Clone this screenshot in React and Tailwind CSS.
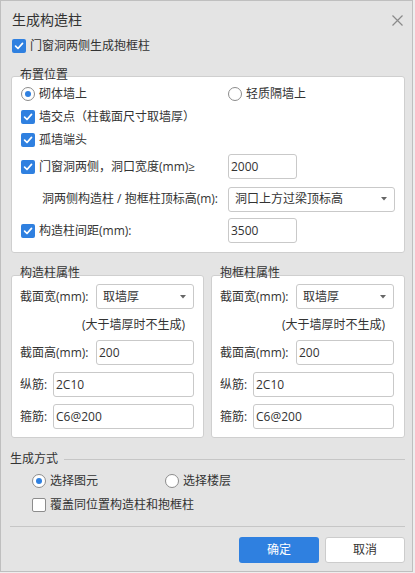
import React from "react";

const font = { fontFamily: '"Open Sans", "Noto Sans CJK SC", sans-serif' };

function Check({ checked = true }) {
  if (!checked) {
    return (
      <span className="block w-[14px] h-[14px] shrink-0 rounded-[2px] border border-[#8c8c8c] bg-white" />
    );
  }
  return (
    <span className="flex w-[14px] h-[14px] shrink-0 items-center justify-center rounded-[2px] bg-[#2f80e0]">
      <svg width="10" height="10" viewBox="0 0 10 10">
        <path d="M1.6 5.2 L4 7.5 L8.5 2.4" fill="none" stroke="white" strokeWidth="1.7" strokeLinecap="round" strokeLinejoin="round" />
      </svg>
    </span>
  );
}

function Radio({ checked }) {
  return (
    <span className="flex w-[14px] h-[14px] shrink-0 items-center justify-center rounded-full border border-[#8c8c8c] bg-white">
      {checked && <span className="block w-[6px] h-[6px] rounded-full bg-[#2f80e0]" />}
    </span>
  );
}

function Input({ value, className = "" }) {
  return (
    <div className={`flex h-[25px] items-center rounded-[3px] border border-[#c9c9c9] bg-white pl-[2px] text-[12px] text-[#333] ${className}`}>
      {value}
    </div>
  );
}

function Select({ value, className = "" }) {
  return (
    <div className={`flex h-[25px] items-center justify-between rounded-[3px] border border-[#c9c9c9] bg-white pl-[6px] pr-[7px] text-[12px] text-[#333] ${className}`}>
      <span>{value}</span>
      <svg width="6" height="4" viewBox="0 0 6 4">
        <path d="M0 0 L6 0 L3 3.5 Z" fill="#666" />
      </svg>
    </div>
  );
}

function PropBox({ title, className = "" }) {
  return (
    <div className={`relative rounded-[3px] border border-[#cfcfcf] bg-white pl-[8px] pt-[8px] pb-[8px] ${className}`}>
      <span className="absolute left-[8px] top-[-10px] h-[14px] leading-[14px] text-[12px] text-[#333]">
        {title}
      </span>
      <div className="flex h-[25px] items-center">
        <span className="w-[76px] text-[12px] text-[#333]">截面宽(mm):</span>
        <Select value="取墙厚" className="w-[98px]" />
      </div>
      <div className="flex h-[31px] items-center pl-[62px] text-[12px] text-[#333]">
        (大于墙厚时不生成)
      </div>
      <div className="flex h-[25px] items-center">
        <span className="w-[76px] text-[12px] text-[#333]">截面高(mm):</span>
        <Input value="200" className="w-[98px]" />
      </div>
      <div className="mt-[7px] flex h-[25px] items-center">
        <span className="w-[33px] text-[12px] text-[#333]">纵筋:</span>
        <Input value="2C10" className="w-[141px]" />
      </div>
      <div className="mt-[7px] flex h-[25px] items-center">
        <span className="w-[33px] text-[12px] text-[#333]">箍筋:</span>
        <Input value="C6@200" className="w-[141px]" />
      </div>
    </div>
  );
}

export default function App() {
  return (
    <div className="w-[415px] h-[573px] bg-[#eeeeee]" style={font}>
      <div className="w-[413px] h-[572px] border border-[#bfbfbf] bg-[#e4e4e4] text-[#333]">
        {/* title */}
        <div className="flex h-[38px] items-center justify-between pl-[11px] pr-[9px]">
          <span className="text-[14px] leading-[16px] text-[#333]">生成构造柱</span>
          <svg width="11" height="11" viewBox="0 0 11 11">
            <path d="M0.5 0.5 L10.5 10.5 M10.5 0.5 L0.5 10.5" stroke="#8a8a8a" strokeWidth="1.2" />
          </svg>
        </div>

        <div className="flex h-[14px] items-center gap-[4px] pl-[11px] text-[12px]">
          <Check />
          <span>门窗洞两侧生成抱框柱</span>
        </div>

        {/* 布置位置 */}
        <div className="relative ml-[10px] mt-[23px] w-[394px] rounded-[3px] border border-[#cfcfcf] bg-white pl-[9px] pt-[7px] pb-[9px] text-[12px]">
          <span className="absolute left-[8px] top-[-9px] h-[14px] leading-[14px]">布置位置</span>
          <div className="flex h-[20px] items-center">
            <div className="flex w-[207px] items-center gap-[4px]">
              <Radio checked />
              <span>砌体墙上</span>
            </div>
            <div className="flex items-center gap-[4px]">
              <Radio />
              <span>轻质隔墙上</span>
            </div>
          </div>
          <div className="mt-[3px] flex h-[20px] items-center gap-[4px]">
            <Check />
            <span>墙交点（柱截面尺寸取墙厚）</span>
          </div>
          <div className="mt-[3px] flex h-[20px] items-center gap-[4px]">
            <Check />
            <span>孤墙端头</span>
          </div>
          <div className="mt-[4px] flex h-[25px] items-center">
            <div className="flex w-[207px] items-center gap-[4px]">
              <Check />
              <span>门窗洞两侧，洞口宽度(mm)≥</span>
            </div>
            <Input value="2000" className="w-[69px]" />
          </div>
          <div className="mt-[8px] flex h-[24px] items-center">
            <div className="w-[207px] pl-[21px]">洞两侧构造柱 / 抱框柱顶标高(m):</div>
            <Select value="洞口上方过梁顶标高" className="w-[167px] h-[24px]" />
          </div>
          <div className="mt-[7px] flex h-[25px] items-center">
            <div className="flex w-[207px] items-center gap-[4px]">
              <Check />
              <span>构造柱间距(mm):</span>
            </div>
            <Input value="3500" className="w-[69px]" />
          </div>
        </div>

        {/* 属性 */}
        <div className="ml-[10px] mt-[22px] flex w-[394px] gap-[7px]">
          <PropBox title="构造柱属性" className="w-[193px]" />
          <PropBox title="抱框柱属性" className="w-[194px]" />
        </div>

        {/* 生成方式 */}
        <div className="ml-[9px] mt-[14px] w-[395px] text-[12px]">
          <div className="flex h-[14px] items-center">
            <span>生成方式</span>
            <div className="ml-[6px] h-px flex-1 bg-[#c6c6c6]" />
          </div>
          <div className="mt-[8px] flex h-[14px] items-center pl-[22px]">
            <div className="flex w-[133px] items-center gap-[4px]">
              <Radio checked />
              <span>选择图元</span>
            </div>
            <div className="flex items-center gap-[4px]">
              <Radio />
              <span>选择楼层</span>
            </div>
          </div>
          <div className="mt-[10px] flex h-[14px] items-center gap-[4px] pl-[22px]">
            <Check checked={false} />
            <span>覆盖同位置构造柱和抱框柱</span>
          </div>
          <div className="mt-[14px] h-px bg-[#c6c6c6]" />
          <div className="mt-[10px] flex justify-end gap-[6px]">
            <button className="h-[26px] w-[80px] rounded-[3px] bg-[#2f80e0] text-[12px] text-white">
              确定
            </button>
            <button className="h-[26px] w-[80px] rounded-[3px] border border-[#cccccc] bg-white text-[12px] text-[#333]">
              取消
            </button>
          </div>
        </div>
      </div>
    </div>
  );
}
